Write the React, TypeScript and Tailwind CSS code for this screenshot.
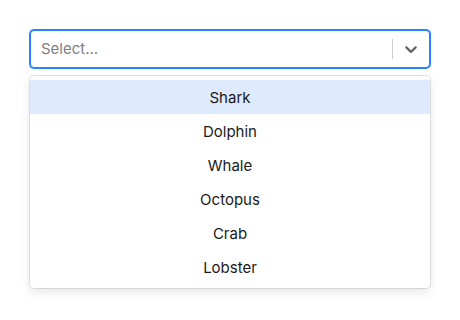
import React from 'react';

const options = ['Shark', 'Dolphin', 'Whale', 'Octopus', 'Crab', 'Lobster'];

const ChevronDown = () => (
  <svg width="20" height="20" viewBox="0 0 20 20" className="fill-[#666666]" aria-hidden="true">
    <path d="M4.516 7.548c0.436-0.446 1.043-0.481 1.576 0l3.908 3.747 3.908-3.747c0.533-0.481 1.141-0.446 1.574 0 0.436 0.445 0.408 1.197 0 1.615-0.406 0.418-4.695 4.502-4.695 4.502-0.217 0.223-0.502 0.335-0.787 0.335s-0.57-0.112-0.789-0.335c0 0-4.287-4.084-4.695-4.502s-0.436-1.17 0-1.615z" />
  </svg>
);

export default function App() {
  return (
    <div className="min-h-screen bg-white p-[30px] font-['Inter',sans-serif] text-[15px]">
      <div className="w-[400px]">
        {/* control */}
        <div className="flex h-[38px] items-center rounded border border-[#2684ff] bg-white shadow-[0_0_0_1px_#2684ff]">
          <div className="flex-1 px-[10px] pt-px text-[#808080]">Select...</div>
          <span className="h-5 w-px self-center bg-[#cccccc]" />
          <div className="flex w-9 items-center justify-center">
            <ChevronDown />
          </div>
        </div>

        {/* menu */}
        <div className="mt-2 rounded bg-white py-1 shadow-[0_0_0_1px_rgba(0,0,0,0.1),0_4px_11px_rgba(0,0,0,0.1)]">
          {options.map((opt, i) => (
            <div
              key={opt}
              className={`flex h-[34px] items-center justify-center pt-[2px] text-[#1a1a1a] ${i === 0 ? 'bg-[#deebff]' : ''}`}
            >
              {opt}
            </div>
          ))}
        </div>
      </div>
    </div>
  );
}
